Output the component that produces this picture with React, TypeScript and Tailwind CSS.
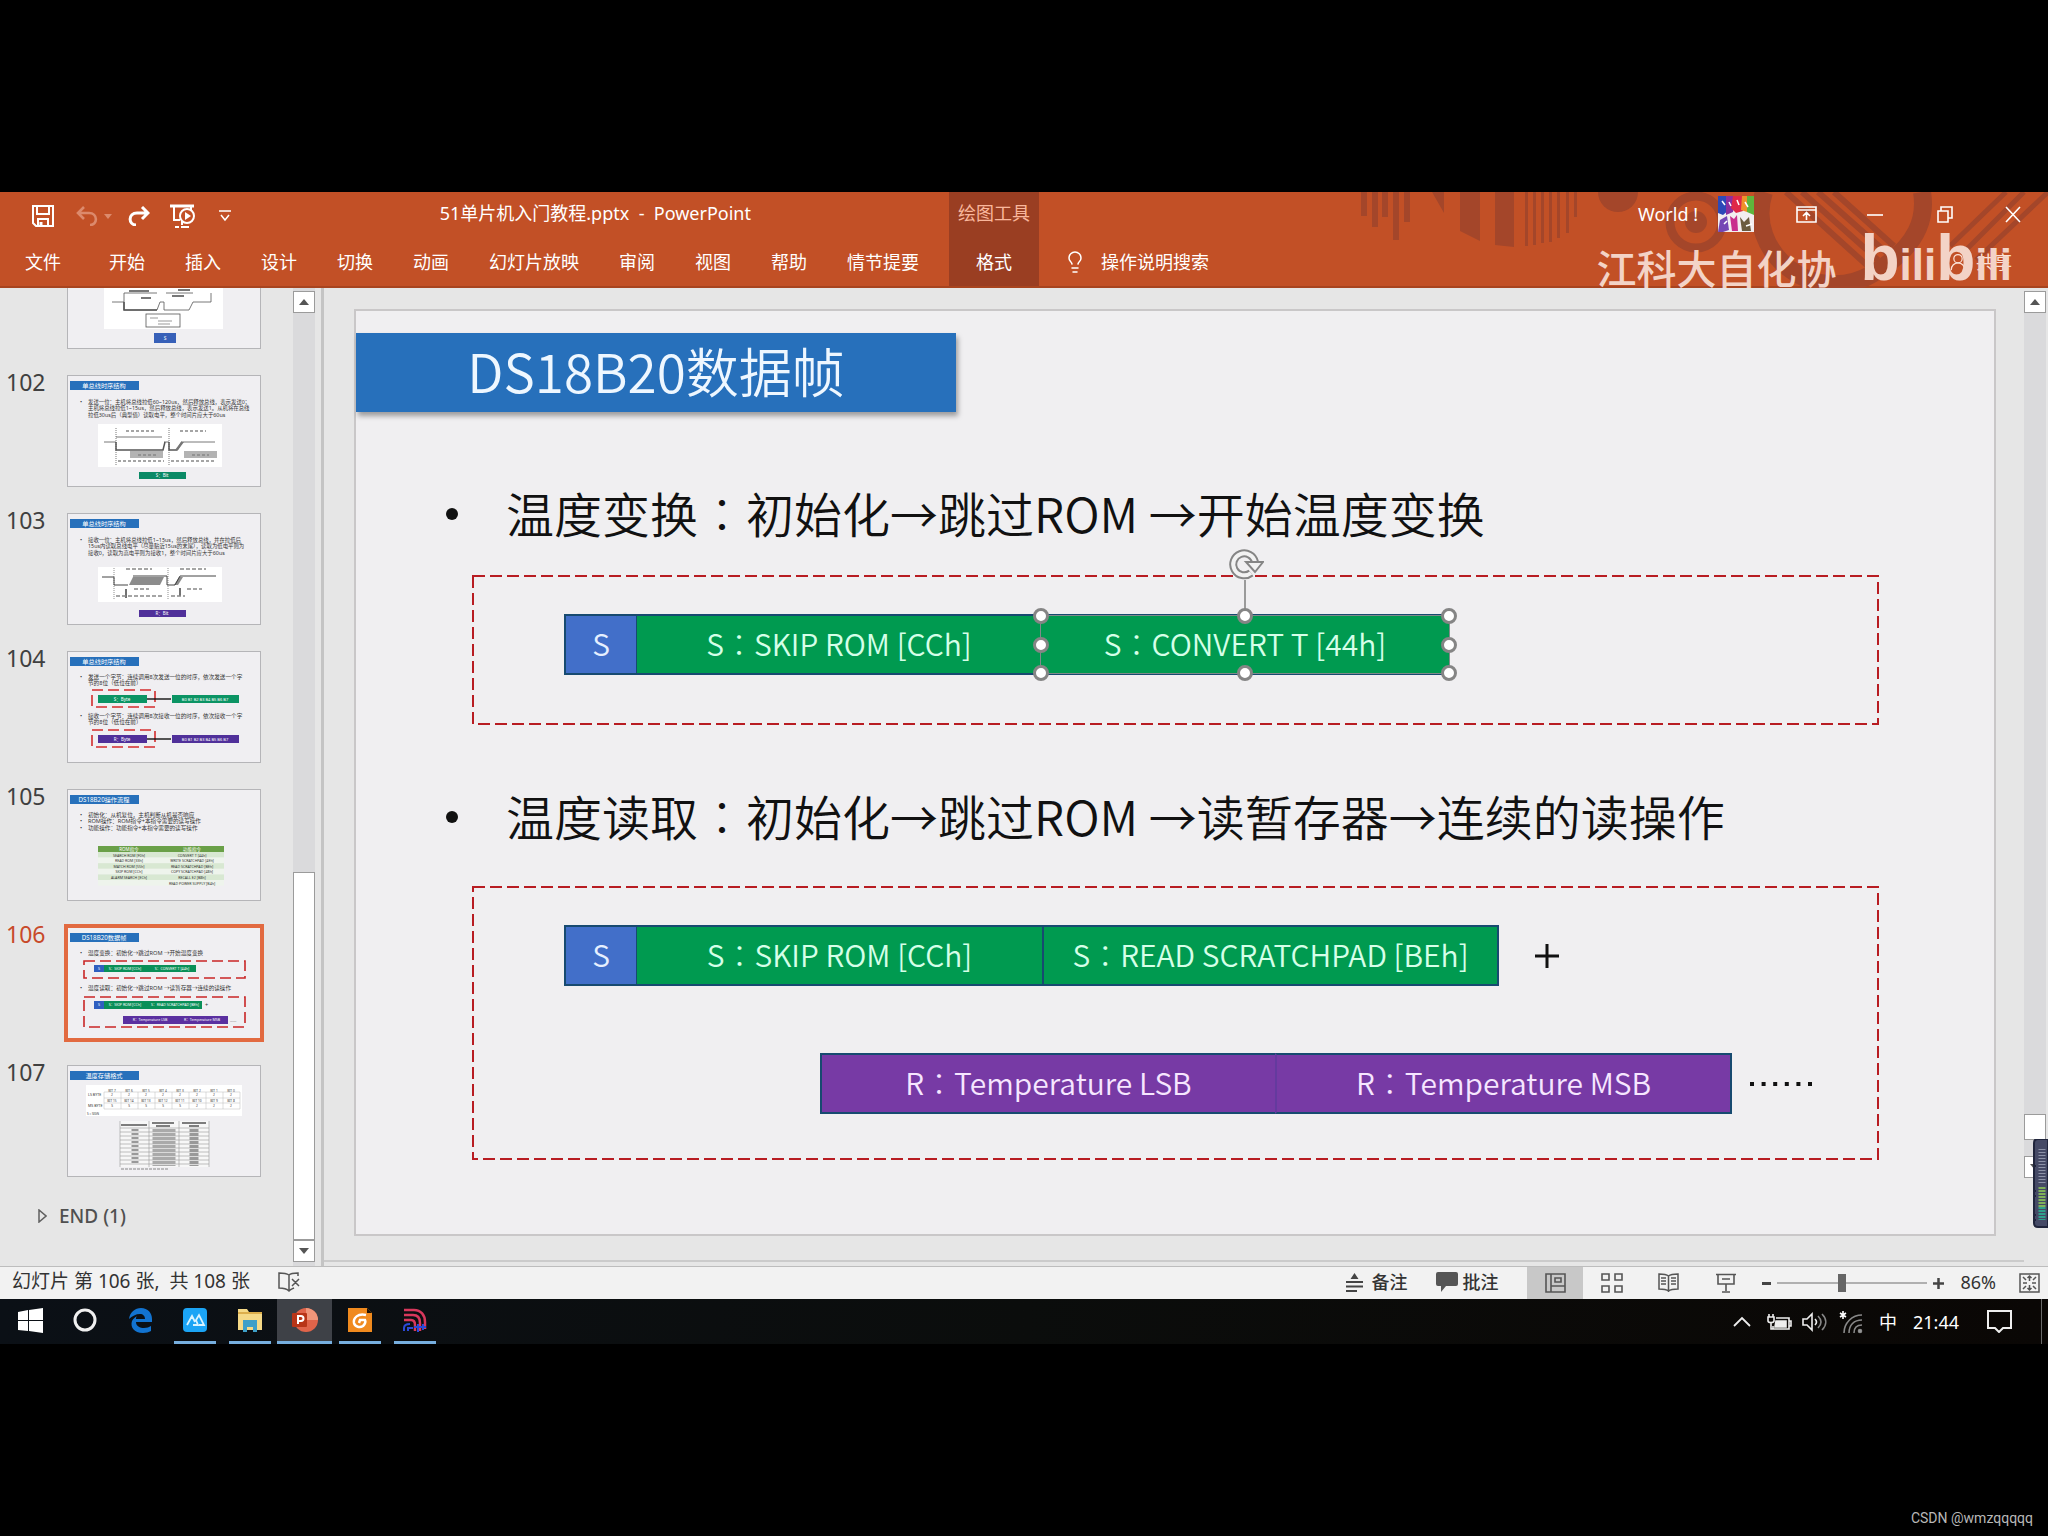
import type { ReactNode } from "react";
import { Lightbulb, UserRound } from "lucide-react";

const tabs = ["开始", "插入", "设计", "切换", "动画", "幻灯片放映", "审阅", "视图", "帮助", "情节提要"];

/* ---------- title bar + ribbon ---------- */

function SaveIcon() {
  return (
    <svg width="22" height="22" viewBox="0 0 22 22" fill="none" stroke="#fff" strokeWidth="2">
      <path d="M1 1h20v20H4l-3-3z" />
      <path d="M5 2v7h12V2M6 21v-7h10v7" />
      <path d="M9 17v4" strokeWidth="3" />
    </svg>
  );
}

function UndoIcon() {
  return (
    <svg width="22" height="20" viewBox="0 0 22 20" fill="none" stroke="#dc8a6c" strokeWidth="2.6">
      <path d="M8 1L2 7l6 6M2 7h11c9 0 9 12 1 12" />
    </svg>
  );
}

function RedoIcon() {
  return (
    <svg width="22" height="20" viewBox="0 0 22 20" fill="none" stroke="#fff" strokeWidth="3">
      <path d="M14 1l6 6-6 6M20 7H9c-9 0-9 12-1 12" />
    </svg>
  );
}

function SlideShowIcon() {
  return (
    <svg width="25" height="24" viewBox="0 0 25 24" fill="none" stroke="#fff" strokeWidth="2">
      <path d="M0 2h24" strokeWidth="3" />
      <path d="M4 3v13h6M21 3v4M12 17v4M5 23h4M11 23h8" />
      <circle cx="17" cy="12" r="7" />
      <path d="M15 8l6 4-6 4z" fill="#fff" stroke="none" />
    </svg>
  );
}

function HeaderArt() {
  return (
    <svg className="absolute right-0 top-0" width="700" height="96" viewBox="1348 192 700 96" fill="#a4462a">
      <path d="M1361 192h6v24h-6zM1372 192h6v35h-6zM1382 192h6v25h-6zM1393 192h6v48h-6zM1404 192h6v30h-6z" />
      <path d="M1432 192h12v21zM1460 192h20v49l-20-10zM1495 192h19v55l-19-2z" />
      <path d="M1525 192h3v54h-3zM1533 192h3v53h-3zM1541 192h3v51h-3zM1549 192h3v50h-3zM1557 192h3v46h-3zM1566 192h3v41h-3zM1574 192h3v25h-3z" />
      <path d="M1598 192h40a20 20 0 0 1-40 0z" />
      <g fill="none" stroke="#a4462a">
        <circle cx="1696" cy="222" r="26" strokeWidth="9" />
        <path d="M1764 192c-20 60 50 116 108 82 48-28 54-58 50-82" strokeWidth="18" />
        <path d="M1786 192l84 76M1802 192l76 68M1818 192l70 62M1834 192l60 54" strokeWidth="6" />
        <path d="M1950 246l56-54M1962 254l62-62M1976 260l72-68" strokeWidth="5" />
      </g>
      <circle cx="1696" cy="222" r="11" />
    </svg>
  );
}

function Avatar() {
  return (
    <svg width="36" height="36" viewBox="0 0 36 36">
      <rect width="36" height="36" fill="#f3eef0" />
      <path d="M0 0h8l3 14-6 5-5-2z" fill="#2c49b8" />
      <path d="M8 0h9l-2 16-7 3z" fill="#8a2fa0" />
      <path d="M15 0h9l1 15-7 2-5-5z" fill="#e02848" />
      <path d="M24 0h7l-2 16-6-2z" fill="#f0912a" />
      <path d="M29 0h7v19l-7-3z" fill="#5fb53c" />
      <path d="M2 24l7-4 2 14-6 2H0z" fill="#7547b5" />
      <path d="M12 20l4 3 3-4 1 16h-6z" fill="#c92f8d" />
      <path d="M22 21l4 5 5-5 2 14h-9z" fill="#6b5b40" />
      <path d="M4 5l3 4M11 6l2 4M19 4l2 5M27 6l3 5M6 28l3-3M28 30l6-2" stroke="#fff" strokeWidth="1.5" />
    </svg>
  );
}

function WindowButtons() {
  return (
    <div className="flex items-center">
      <button aria-label="功能区显示选项" className="flex w-[64px] justify-center">
        <svg width="21" height="17" viewBox="0 0 21 17" fill="none" stroke="#fff" strokeWidth="1.6">
          <path d="M1 1h19v15H1zM1 4h19M10.500 14V7M7 10l3.500-3.500L14 10" />
        </svg>
      </button>
      <button aria-label="最小化" className="flex w-[74px] justify-center">
        <svg width="16" height="17" viewBox="0 0 16 17" stroke="#fff" strokeWidth="1.600">
          <path d="M0 9h16" />
        </svg>
      </button>
      <button aria-label="还原" className="flex w-[66px] justify-center">
        <svg width="16" height="17" viewBox="0 0 16 17" fill="none" stroke="#fff" strokeWidth="1.600">
          <path d="M1 5h10v11H1zM4 5V1h11v11h-4" />
        </svg>
      </button>
      <button aria-label="关闭" className="flex w-[70px] justify-center">
        <svg width="16" height="17" viewBox="0 0 16 17" fill="none" stroke="#fff" strokeWidth="1.600">
          <path d="M1 1l14 15M15 1L1 16" />
        </svg>
      </button>
    </div>
  );
}

function Header() {
  return (
    <header className="relative flex h-24 border-b-2 border-[#a8441f] bg-[#c25026] text-lg text-white">
      <HeaderArt />
      <div className="relative flex flex-col pr-2.5">
        <div className="flex h-12 items-center pl-8">
          <button aria-label="保存"><SaveIcon /></button>
          <button aria-label="撤消" className="ml-[22px]"><UndoIcon /></button>
          <svg className="ml-1.5" width="8" height="5" viewBox="0 0 8 5" fill="#dc8a6c"><path d="M0 0h8L4 5z" /></svg>
          <button aria-label="恢复" className="ml-4"><RedoIcon /></button>
          <button aria-label="从头开始" className="ml-5"><SlideShowIcon /></button>
          <button aria-label="自定义快速访问工具栏" className="ml-6">
            <svg width="12" height="12" viewBox="0 0 12 12" fill="none" stroke="#fff" strokeWidth="1.500">
              <path d="M0 1h12M2 5l4 5 4-5" />
            </svg>
          </button>
          <h1 className="ml-auto mr-[188px] whitespace-pre pb-1.5">51单片机入门教程.pptx  -  PowerPoint</h1>
        </div>
        <nav className="flex h-11 items-center">
          <button className="pl-[25px] pr-7">文件</button>
          {tabs.map((t) => (
            <button key={t} className="px-5">{t}</button>
          ))}
        </nav>
      </div>
      <div className="relative flex w-[90px] shrink-0 flex-col items-center bg-[#9a3e22]">
        <div className="flex h-12 items-center pb-1.5 text-[#f9b79c]">绘图工具</div>
        <button className="h-11">格式</button>
      </div>
      <div className="relative flex min-w-0 flex-1 flex-col">
        <div className="flex h-12 items-center justify-end pb-1">
          <span>World !</span>
          <span className="ml-5 mr-5"><Avatar /></span>
          <WindowButtons />
        </div>
        <div className="flex h-11 items-center pl-6">
          <Lightbulb size={24} strokeWidth={1.5} />
          <input
            aria-label="操作说明搜索"
            placeholder="操作说明搜索"
            className="ml-3.5 w-40 bg-transparent outline-none placeholder:text-white placeholder:opacity-100"
          />
          <button className="ml-auto flex items-center gap-2 pr-9 text-[#fbe3d8]">
            <UserRound size={20} strokeWidth={1.500} />共享
          </button>
        </div>
      </div>
      {/* channel watermark, lies over the ribbon */}
      <div className="pointer-events-none absolute right-9 top-[36px] flex items-end text-[#f3d3c6]">
        <span className="mr-6 text-[40px] font-medium leading-[52px]">江科大自化协</span>
        <span className="font-['Liberation_Sans',sans-serif] text-[44px] font-bold leading-[60px]">
          <span className="text-[64px]">b</span>ili<span className="text-[64px]">b</span>ili
        </span>
      </div>
    </header>
  );
}

/* ---------- thumbnails ---------- */

type LineProps = { x?: number; y: number; fill?: string; size?: number; anchor?: "start" | "middle"; children: ReactNode };

function T({ x = 20, y, fill = "#333", size = 5.600, anchor = "start", children }: LineProps) {
  return (
    <text x={x} y={y} fill={fill} fontSize={size} textAnchor={anchor}>{children}</text>
  );
}

function ThumbTitle({ children }: { children: ReactNode }) {
  return (
    <>
      <rect x="2" y="5" width="69" height="9" fill="#2770bb" />
      <T x={36} y={12} size={6.200} fill="#fff" anchor="middle">{children}</T>
    </>
  );
}

function Thumb101() {
  return (
    <>
      <rect x="36" y="10" width="119" height="81" fill="#fff" />
      <g fill="none" stroke="#555" strokeWidth="0.800">
        <path d="M56 55v17h33l3-8h4v8h25l4-8h18M56 64H44M56 55h33M98 55h27M143 55v9" />
        <path d="M56 64v8h33" strokeWidth="1.600" />
        <rect x="78" y="76" width="34" height="13" />
      </g>
      <path d="M73 60h10M104 58h12M61 53h20M110 52h12" stroke="#777" strokeWidth="2" />
      <path d="M82 80h8M90 83h14M90 86h12" stroke="#999" />
      <rect x="86" y="95" width="22" height="10" fill="#3760b8" />
      <T x={97} y={102} size={5} fill="#fff" anchor="middle">S</T>
    </>
  );
}

function Thumb102() {
  return (
    <>
      <ThumbTitle>单总线时序结构</ThumbTitle>
      <T x={12} y={28}>•</T>
      <T y={28} size={5.400}>发送一位：主机将总线拉低60~120us，然后释放总线，表示发送0；</T>
      <T y={34} size={5.400}>主机将总线拉低1~15us，然后释放总线，表示发送1。从机将在总线</T>
      <T y={41} size={5.400}>拉低30us后（典型值）读取电平，整个时间片应大于60us</T>
      <rect x="30" y="48" width="124" height="43" fill="#fff" />
      <g fill="none" stroke="#555" strokeWidth="0.800">
        <path d="M48 52v38M101 52v38" strokeDasharray="1 1" />
        <path d="M36 66h12M96 66h5M113 66h34M48 61h46" />
        <path d="M48 66v8h47l2-8M101 66v8h8l5-8" strokeWidth="1.500" />
      </g>
      <path d="M62 75h33v7H62zM116 75h33v7h-33z" fill="#b3b3b3" />
      <path d="M107 74l6-8h3l-6 8z" fill="#777" />
      <path d="M58 55h28M112 55h26M70 79h18M124 79h17M50 85h46M103 85h45" stroke="#888" strokeWidth="1.500" strokeDasharray="3 2" />
      <rect x="71" y="96" width="47" height="7" fill="#0b8a66" />
      <T x={94} y={101} size={4.500} fill="#fff" anchor="middle">S：Bit</T>
    </>
  );
}

function Thumb103() {
  return (
    <>
      <ThumbTitle>单总线时序结构</ThumbTitle>
      <T x={12} y={28}>•</T>
      <T y={28} size={5.400}>接收一位：主机将总线拉低1~15us，然后释放总线，并在拉低后</T>
      <T y={34} size={5.400}>15us内读取总线电平（尽量贴近15us的末尾），读取为低电平则为</T>
      <T y={41} size={5.400}>接收0，读取为高电平则为接收1，整个时间片应大于60us</T>
      <rect x="30" y="53" width="124" height="35" fill="#fff" />
      <path d="M61 71l4-8h31l-4 8zM106 71l5-8h4l-5 8z" fill="#8c8c8c" />
      <g fill="none" stroke="#444">
        <path d="M34 63h12v8h14M65 62h34v9h8l5-9h36" />
        <path d="M46 54v32M100 54v32" strokeWidth="0.600" strokeDasharray="1 1" />
        <path d="M58 84v-9M112 82v-8" strokeWidth="1.500" />
      </g>
      <path d="M58 55h26M112 55h26M66 75h15M119 75h15M48 82h46M103 82h14" stroke="#888" strokeWidth="1.500" strokeDasharray="4 2" />
      <rect x="71" y="96" width="47" height="7" fill="#50309a" />
      <T x={94} y={101} size={4.500} fill="#fff" anchor="middle">R：Bit</T>
    </>
  );
}

function ByteRow({ y, fill, label, prefix }: { y: number; fill: string; label: string; prefix: string }) {
  return (
    <>
      <rect x="24" y={y} width="63" height="17" fill="none" stroke="#d32c2c" strokeWidth="1.600" strokeDasharray="11 5" />
      <rect x="30" y={y + 5} width="49" height="8" fill={fill} />
      <T x={54} y={y + 11} size={4.500} fill="#fff" anchor="middle">{label}</T>
      <path d={`M79 ${y + 9}h24`} stroke="#111" strokeWidth="1.400" />
      <rect x="104" y={y + 5} width="67" height="8" fill={fill} />
      <T x={137} y={y + 11} size={4} fill="#fff" anchor="middle">{[0, 1, 2, 3, 4, 5, 6, 7].map((n) => prefix + n).join("  ")}</T>
    </>
  );
}

function Thumb104() {
  return (
    <>
      <ThumbTitle>单总线时序结构</ThumbTitle>
      <T x={12} y={27}>•</T>
      <T y={27}>发送一个字节：连续调用8次发送一位的时序，依次发送一个字</T>
      <T y={33}>节的8位（低位在前）</T>
      <ByteRow y={38} fill="#0b9464" label="S：Byte" prefix="B" />
      <T x={12} y={66}>•</T>
      <T y={66}>接收一个字节：连续调用8次接收一位的时序，依次接收一个字</T>
      <T y={72}>节的8位（低位在前）</T>
      <ByteRow y={78} fill="#50309a" label="R：Byte" prefix="B" />
    </>
  );
}

const commands = [
  ["SEARCH ROM [F0h]", "CONVERT T [44h]"],
  ["READ ROM [33h]", "WRITE SCRATCHPAD [4Eh]"],
  ["MATCH ROM [55h]", "READ SCRATCHPAD [BEh]"],
  ["SKIP ROM [CCh]", "COPY SCRATCHPAD [48h]"],
  ["ALARM SEARCH [ECh]", "RECALL E2 [B8h]"],
  ["", "READ POWER SUPPLY [B4h]"],
];

function Thumb105() {
  return (
    <>
      <ThumbTitle>DS18B20操作流程</ThumbTitle>
      <T x={12} y={27}>•</T>
      <T y={27}>初始化：从机复位，主机判断从机是否响应</T>
      <T x={12} y={33}>•</T>
      <T y={33}>ROM操作：ROM指令+本指令需要的读写操作</T>
      <T x={12} y={40}>•</T>
      <T y={40}>功能操作：功能指令+本指令需要的读写操作</T>
      <rect x="30" y="56" width="126" height="6" fill="#6aa048" />
      <T x={61} y={61} size={4.500} fill="#fff" anchor="middle">ROM指令</T>
      <T x={124} y={61} size={4.500} fill="#fff" anchor="middle">功能指令</T>
      {commands.map(([a, b], i) => (
        <g key={b}>
          <rect x="30" y={62 + i * 5.600} width="126" height="5.600" fill={i % 2 ? "#eef4ec" : "#d8e8d2"} />
          <T x={61} y={66.500 + i * 5.600} size={3.600} anchor="middle">{a}</T>
          <T x={124} y={66.500 + i * 5.600} size={3.600} anchor="middle">{b}</T>
        </g>
      ))}
    </>
  );
}

function Thumb106() {
  return (
    <>
      <ThumbTitle>DS18B20数据帧</ThumbTitle>
      <T x={12} y={27}>•</T>
      <T y={27}>温度变换：初始化→跳过ROM →开始温度变换</T>
      <g fill="none" stroke="#c92626" strokeWidth="1.600" strokeDasharray="11 5">
        <rect x="16" y="33" width="161" height="17" />
        <rect x="16" y="69" width="161" height="30" />
      </g>
      <rect x="26" y="37" width="10" height="7" fill="#2f5fc0" />
      <rect x="36" y="37" width="92" height="7" fill="#0a8f58" />
      <T x={31} y={42} size={3.600} fill="#fff" anchor="middle">S</T>
      <T x={57} y={42} size={3.600} fill="#fff" anchor="middle">S：SKIP ROM [CCh]</T>
      <T x={104} y={42} size={3.600} fill="#fff" anchor="middle">S：CONVERT T [44h]</T>
      <T x={12} y={62}>•</T>
      <T y={62}>温度读取：初始化→跳过ROM →读暂存器→连续的读操作</T>
      <rect x="26" y="73" width="10" height="8" fill="#2f5fc0" />
      <rect x="36" y="73" width="98" height="8" fill="#0a8f58" />
      <T x={31} y={78} size={3.600} fill="#fff" anchor="middle">S</T>
      <T x={57} y={78} size={3.600} fill="#fff" anchor="middle">S：SKIP ROM [CCh]</T>
      <T x={107} y={78} size={3.600} fill="#fff" anchor="middle">S：READ SCRATCHPAD [BEh]</T>
      <T x={137} y={79}>+</T>
      <rect x="55" y="88" width="105" height="8" fill="#5a30a0" />
      <T x={82} y={93} size={3.600} fill="#fff" anchor="middle">R：Temperature LSB</T>
      <T x={134} y={93} size={3.600} fill="#fff" anchor="middle">R：Temperature MSB</T>
      <T x={162} y={94} size={4}>……</T>
    </>
  );
}

const eight = [0, 1, 2, 3, 4, 5, 6, 7];

function Thumb107() {
  return (
    <>
      <ThumbTitle>温度存储格式</ThumbTitle>
      <rect x="18" y="19" width="156" height="31" fill="#fff" />
      <T x={20} y={30} size={3.600}>LS BYTE</T>
      <T x={20} y={41} size={3.600}>MS BYTE</T>
      <T x={19} y={49} size={3}>S = SIGN</T>
      {eight.map((n) => (
        <g key={n}>
          <T x={44 + n * 17} y={25.500} size={3.200} anchor="middle">BIT {7 - n}</T>
          <T x={44 + n * 17} y={30} size={3.200} anchor="middle">2</T>
          <T x={44 + n * 17} y={36} size={3.200} anchor="middle">BIT {15 - n}</T>
          <T x={44 + n * 17} y={41} size={3.200} anchor="middle">{n < 5 ? "S" : "2"}</T>
        </g>
      ))}
      <path d="M36 26h136M36 32h136M36 37h136M36 43h136M36 26v17M53 26v17M70 26v17M87 26v17M104 26v17M121 26v17M138 26v17M155 26v17M172 26v17" stroke="#bbb" strokeWidth="0.500" />
      <rect x="52" y="55" width="89" height="46" fill="#f7f7f7" />
      <path d="M52 62h89M52 66h89M52 70h89M52 74h89M52 78h89M52 82h89M52 86h89M52 90h89M52 94h89M52 98h89M52 55v46M81 55v46M111 55v46M141 55v46" stroke="#999" strokeWidth="0.600" />
      <path d="M53 59h26M84 57h22M88 60h14M114 57h24M121 60h10" stroke="#555" strokeWidth="1.500" />
      <path d="M67 63v36" stroke="#999" strokeWidth="7" strokeDasharray="2 2" />
      <path d="M96 63v37" stroke="#aaa" strokeWidth="23" strokeDasharray="3 1" />
      <path d="M126 63v37" stroke="#999" strokeWidth="9" strokeDasharray="3 1" />
      <path d="M53 103h48" stroke="#888" strokeDasharray="3 1" />
    </>
  );
}

const slides = [
  { no: "", art: <Thumb101 /> },
  { no: "102", art: <Thumb102 /> },
  { no: "103", art: <Thumb103 /> },
  { no: "104", art: <Thumb104 /> },
  { no: "105", art: <Thumb105 /> },
  { no: "106", art: <Thumb106 />, active: true },
  { no: "107", art: <Thumb107 /> },
];

function SlidePanel() {
  return (
    <aside className="w-[293px] shrink-0 overflow-hidden">
      <ul className="-mt-[50px] flex flex-col gap-7">
        {slides.map((s) => (
          <li key={s.no} className="flex">
            <span className={`w-[68px] pl-1.5 text-[23px] leading-[12px] ${s.active ? "text-[#c8492a]" : "text-[#404040]"}`}>{s.no}</span>
            <button
              aria-label={`幻灯片 ${s.no}`}
              className={`h-[110px] w-[192px] bg-[#f0eff2] ${s.active ? "outline-4 outline-[#e26a40]" : "outline-1 outline-[#b5b5b8]"}`}
            >
              <svg width="192" height="110" viewBox="0 0 192 110">{s.art}</svg>
            </button>
          </li>
        ))}
      </ul>
      <button className="mt-[26px] flex items-center gap-3 pl-[38px] text-[19px] font-medium leading-[28px] text-[#505050]">
        <svg width="9" height="14" viewBox="0 0 9 14" fill="none" stroke="#606060" strokeWidth="1.500"><path d="M1 1v12l7-6z" /></svg>
        END (1)
      </button>
    </aside>
  );
}

/* ---------- scroll bars ---------- */

function Arrow({ down }: { down?: boolean }) {
  return (
    <button
      aria-label={down ? "向下滚动" : "向上滚动"}
      className="flex h-[22px] w-[22px] shrink-0 items-center justify-center border border-[#9b9b9b] bg-white"
    >
      <svg width="10" height="6" viewBox="0 0 10 6" fill="#555"><path d={down ? "M0 0h10L5 6z" : "M0 6h10L5 0z"} /></svg>
    </button>
  );
}

function RecorderBar() {
  return (
    <svg className="absolute right-0 top-[851px]" width="15" height="89" viewBox="0 0 15 89">
      <path d="M15 0H5Q1 0 1 4v80q0 4 4 4h10z" fill="#454a66" stroke="#20253c" strokeWidth="2" />
      <path d="M9 10v36" stroke="#8d93a8" strokeWidth="7" strokeDasharray="1 2" />
      <path d="M9 48v20" stroke="#7fb05a" strokeWidth="7" strokeDasharray="2 1" />
      <path d="M9 68v13" stroke="#2fa08c" strokeWidth="7" strokeDasharray="2 1" />
      <path d="M0 27h3M0 52h3M0 57h3M0 76h3M0 81h3" stroke="#20253c" strokeWidth="2" />
    </svg>
  );
}

/* ---------- slide ---------- */

// full-width colon with its dots in the middle of the cell
function Colon() {
  return <span className="font-['Noto_Sans_CJK_TC',sans-serif] font-light">：</span>;
}

function Bullet({ children }: { children: ReactNode }) {
  return (
    <li className="flex items-center text-5xl leading-[60px] text-[#111]">
      <span className="mr-[48px] h-3 w-3 rounded-full bg-[#111]" />
      <span className="whitespace-pre pb-1">{children}</span>
    </li>
  );
}

function DashedBox({ className, children }: { className: string; children: ReactNode }) {
  return (
    <div className={`relative ml-[117px] mr-[116px] ${className}`}>
      <svg className="absolute inset-0 h-full w-full overflow-visible" fill="none">
        <rect width="100%" height="100%" stroke="#b81c22" strokeWidth="2" strokeDasharray="12 5" />
      </svg>
      <div className="relative">{children}</div>
    </div>
  );
}

function Cell({ className, children }: { className: string; children: ReactNode }) {
  return (
    <div className={`relative flex h-[61px] items-center justify-center whitespace-pre border-y-2 border-[#174a70] pb-0.5 text-[30px] ${className}`}>
      {children}
    </div>
  );
}

const green = "bg-[#009a50] text-[#d5ffe8]";
const purple = "bg-[#773aa5] text-[#f6e6ff]";

const knobs = [
  "left-0 top-0", "left-1/2 top-0", "left-full top-0",
  "left-0 top-1/2", "left-full top-1/2",
  "left-0 top-full", "left-1/2 top-full", "left-full top-full",
];

function Selection() {
  return (
    <div className="absolute inset-0 outline-1 outline-[#7f8a8a]">
      <div className="absolute bottom-full left-1/2 flex -translate-x-1/2 flex-col items-center">
        <svg width="38" height="32" viewBox="0 0 38 32" fill="none">
          <path d="M25 25A11 11 0 1 1 29 14" stroke="#858585" strokeWidth="8" />
          <path d="M25 25A11 11 0 1 1 29 14" stroke="#f2f2f2" strokeWidth="4" />
          <path d="M20 14h17l-8 10z" fill="#f2f2f2" stroke="#858585" strokeWidth="2" />
        </svg>
        <div className="h-9 w-0.5 bg-[#9a9a9a]" />
      </div>
      {knobs.map((k) => (
        <span key={k} className={`absolute h-4 w-4 -translate-x-1/2 -translate-y-1/2 rounded-full border-[3px] border-[#858585] bg-white ${k}`} />
      ))}
    </div>
  );
}

function Slide() {
  return (
    <article className="mb-6 ml-[30px] mr-7 mt-[21px] flex-1 border-2 border-[#c9c7c8] bg-[#f0eff1] pb-[75px] font-[350]">
      <h2 className="mt-[22px] flex h-[79px] w-[600px] items-center justify-center bg-[#2770bb] pb-1 text-[53px] text-[#eef7ff] shadow-[2px_4px_5px_rgba(0,0,0,0.35)]">
        DS18B20数据帧
      </h2>
      <ul className="pl-[90px] pt-[70px]">
        <Bullet>温度变换<Colon />初始化→跳过ROM →开始温度变换</Bullet>
      </ul>
      <DashedBox className="mt-[30px] pb-[49px] pl-[91px] pt-[38px]">
        <div className="flex">
          <Cell className="w-[72px] border-l-2 bg-[#426fc9] text-[#e6efff]">S</Cell>
          <Cell className={`w-[405px] border-l ${green}`}>S<Colon />SKIP ROM [CCh]</Cell>
          <Cell className={`w-[408px] ${green}`}>
            S<Colon />CONVERT T [44h]
            <Selection />
          </Cell>
        </div>
      </DashedBox>
      <ul className="pl-[90px] pt-[61px]">
        <Bullet>温度读取<Colon />初始化→跳过ROM →读暂存器→连续的读操作</Bullet>
      </ul>
      <DashedBox className="mt-[38px] pb-[45px] pl-[91px] pt-[38px]">
        <div className="flex items-center">
          <Cell className="w-[72px] border-l-2 bg-[#426fc9] text-[#e6efff]">S</Cell>
          <Cell className={`w-[406px] border-l ${green}`}>S<Colon />SKIP ROM [CCh]</Cell>
          <Cell className={`w-[457px] border-x-2 ${green}`}>S<Colon />READ SCRATCHPAD [BEh]</Cell>
          <svg className="ml-9" width="24" height="24" viewBox="0 0 24 24" stroke="#111" strokeWidth="3"><path d="M12 0v24M0 12h24" /></svg>
        </div>
        <div className="flex items-center pl-[256px] pt-[67px]">
          <Cell className={`w-[455px] border-l-2 ${purple}`}>R<Colon />Temperature LSB</Cell>
          <Cell className={`w-[457px] border-x-2 border-l-[#643a9e] ${purple}`}>R<Colon />Temperature MSB</Cell>
          <svg className="ml-[18px]" width="64" height="4" viewBox="0 0 64 4"><path d="M0 2h64" stroke="#111" strokeWidth="4" strokeDasharray="4 7.600" /></svg>
        </div>
      </DashedBox>
    </article>
  );
}

/* ---------- status bar ---------- */

function StatusBar() {
  return (
    <footer className="flex h-8 items-center bg-[#f2f2f2] text-lg text-[#333]">
      <span className="whitespace-pre pb-0.5 pl-3 text-[19px]">幻灯片 第 106 张,  共 108 张</span>
      <button aria-label="拼写检查" className="ml-7 pb-0.5">
        <svg width="23" height="20" viewBox="0 0 23 20" fill="none" stroke="#555" strokeWidth="1.500">
          <path d="M11 3v16M11 3C8 1 5 1 1 1v15c4 0 7 0 10 3 2-2 3-2 5-3M11 3c2-2 5-2 9-2v3M14 7l7 7M21 7l-7 7" />
        </svg>
      </button>
      <div className="ml-auto flex h-full items-center">
        <button className="mr-[29px] flex items-center gap-2 pb-0.5 font-medium">
          <svg width="17" height="19" viewBox="0 0 17 19" fill="#444"><path d="M8.500 0l4 6h-8zM0 8h17v2H0zM0 12.500h17v2H0zM0 17h11v2H0z" /></svg>
          备注
        </button>
        <button className="mr-[29px] flex items-center gap-1 pb-0.5 font-medium">
          <svg width="22" height="20" viewBox="0 0 22 20" fill="#555"><path d="M2 0h18q2 0 2 2v10q0 2-2 2H10l-5 6v-6H2q-2 0-2-2V2q0-2 2-2z" /></svg>
          批注
        </button>
        <button aria-label="普通视图" className="flex h-full w-[56px] items-center justify-center bg-[#c8c8c8]">
          <svg width="21" height="20" viewBox="0 0 21 20" fill="none" stroke="#555" strokeWidth="1.600"><path d="M1 1h19v18H1zM6 1v18M6 13h14M10 5h6v4h-6z" /></svg>
        </button>
        <button aria-label="幻灯片浏览" className="flex w-[57px] justify-center">
          <svg width="22" height="20" viewBox="0 0 22 20" fill="none" stroke="#555" strokeWidth="1.600"><path d="M1 1h7v6H1zM14 1h7v6h-7zM1 13h7v6H1zM14 13h7v6h-7z" /></svg>
        </button>
        <button aria-label="阅读视图" className="flex w-[57px] justify-center">
          <svg width="21" height="20" viewBox="0 0 21 20" fill="none" stroke="#555" strokeWidth="1.500"><path d="M10.500 3v16M10.500 3C8 1 4 1 1 1v15c4 0 7 0 9.500 2 2.500-2 6-2 9.500-2V1c-3 0-7 0-9.500 2zM3 5h5M3 8h5M3 11h5M13 5h5M13 8h5M13 11h5" /></svg>
        </button>
        <button aria-label="幻灯片放映" className="flex w-[57px] justify-center">
          <svg width="20" height="20" viewBox="0 0 20 20" fill="none" stroke="#555" strokeWidth="1.600"><path d="M0 1.500h20M2 2v9h16V2M6 6h8M10 11v7M6 19h8" /></svg>
        </button>
        <button aria-label="缩小" className="ml-2 h-[3px] w-[9px] bg-[#444]" />
        <input
          type="range"
          aria-label="显示比例"
          min={0}
          max={100}
          defaultValue={43}
          className="mx-1.5 h-5 w-[150px] appearance-none bg-transparent [&::-webkit-slider-runnable-track]:h-0.5 [&::-webkit-slider-runnable-track]:bg-[#b0b0b0] [&::-webkit-slider-thumb]:-mt-2 [&::-webkit-slider-thumb]:h-[18px] [&::-webkit-slider-thumb]:w-2 [&::-webkit-slider-thumb]:appearance-none [&::-webkit-slider-thumb]:bg-[#666]"
        />
        <button aria-label="放大">
          <svg width="11" height="11" viewBox="0 0 11 11" stroke="#444" strokeWidth="2.500"><path d="M5.500 0v11M0 5.500h11" /></svg>
        </button>
        <span className="ml-4 pb-0.5">86%</span>
        <button aria-label="使幻灯片适应当前窗口" className="ml-[23px] mr-2">
          <svg width="21" height="20" viewBox="0 0 21 20" fill="none" stroke="#555" strokeWidth="1.500"><path d="M1 1h19v18H1zM10.500 3v5M10.500 12v5M4 10h4M13 10h4M8.500 5l2-2 2 2M8.500 15l2 2 2-2M4 4l3 3M17 4l-3 3M4 16l3-3M17 16l-3-3" /></svg>
        </button>
      </div>
    </footer>
  );
}

/* ---------- taskbar ---------- */

const apps = [
  {
    name: "开始",
    icon: <path d="M1 5l10-2v10H1zM12 3l14-2v12H12zM1 14h10v10L1 23zM12 14h14v12l-14-2z" fill="#fff" />,
  },
  { name: "Cortana", icon: <circle cx="13" cy="13" r="10" fill="none" stroke="#f0f0f0" strokeWidth="3" /> },
  {
    name: "Edge",
    icon: <path d="M2 12C3 5 8 1 14 1c7 0 11 5 11 11v3H9c0 4 4 6 8 6 3 0 5-1 7-2v5c-2 1-5 2-8 2-9 0-13-6-11-12 1-2 3-4 5-5-1 1-1 2-1 3h9c0-3-2-5-5-5-4 0-8 2-11 5z" fill="#1273d0" />,
  },
  {
    name: "MindMaster",
    open: true,
    icon: (
      <>
        <rect x="1" y="1" width="24" height="24" rx="4" fill="#1ba4f5" />
        <path d="M5 18l5-9 3 6M11 18h5l-2-5 3-5 5 10h-5" fill="none" stroke="#d8f3ff" strokeWidth="1.800" />
      </>
    ),
  },
  {
    name: "文件资源管理器",
    open: true,
    icon: (
      <>
        <path d="M1 2h9l2 3h13v18H1z" fill="#f5d987" />
        <path d="M1 5h24v2H1z" fill="#dcae4c" />
        <path d="M6 13h14v12h-4v-5h-6v5H6z" fill="#3d9fc8" />
      </>
    ),
  },
  {
    name: "PowerPoint",
    open: true,
    current: true,
    icon: (
      <>
        <circle cx="14" cy="13" r="12" fill="#e0644a" />
        <path d="M14 1a12 12 0 0 1 12 12H14z" fill="#f0967a" />
        <rect x="0" y="6" width="15" height="14" rx="1" fill="#b83518" />
        <path d="M6 17V9h3a2.500 2.500 0 0 1 0 5H6" fill="none" stroke="#fff" strokeWidth="2" />
      </>
    ),
  },
  {
    name: "Foxit",
    open: true,
    icon: (
      <>
        <path d="M1 1h19l5 5v19H1z" fill="#f08a1e" />
        <path d="M20 1v5h5z" fill="#1a1208" />
        <path d="M19 8c-8-2-13 3-12 8 1 4 6 5 9 3 2-2 3-4 2-6h-5l-1 3" fill="none" stroke="#fff" strokeWidth="2.500" />
      </>
    ),
  },
  {
    name: "录屏",
    open: true,
    icon: (
      <>
        <path d="M2 3h10c7 0 11 5 11 12v7M2 8h9c5 0 7 3 7 8v8M2 13h7c3 0 4 2 4 5v6" fill="none" stroke="#d8385c" strokeWidth="2.500" />
        <path d="M2 24v-3c0-3 3-4 6-4M6 24v-3h5M12 20h12M16 17v8M21 17v6" fill="none" stroke="#2b4ad8" strokeWidth="2" />
      </>
    ),
  },
];

function Taskbar() {
  return (
    <div className="flex h-[45px] items-center bg-linear-to-r from-[#0b1016] via-[#0b0d0c] to-[#0a0705] text-white">
      <div className="flex h-full pl-0.5">
        {apps.map((a) => (
          <button
            key={a.name}
            aria-label={a.name}
            className={`flex h-full w-[55px] flex-col items-center ${a.current ? "bg-[#3e4147]" : ""}`}
          >
            <span className="flex flex-1 items-center"><svg width="26" height="26" viewBox="0 0 26 26">{a.icon}</svg></span>
            <span className={`h-[3px] ${a.current ? "w-full" : "w-[42px]"} ${a.open ? "bg-[#76aede]" : ""}`} />
          </button>
        ))}
      </div>
      <div className="ml-auto flex h-full items-center">
        <button aria-label="显示隐藏的图标" className="mr-4">
          <svg width="18" height="11" viewBox="0 0 18 11" fill="none" stroke="#eee" strokeWidth="1.800"><path d="M1 10l8-8 8 8" /></svg>
        </button>
        <svg className="mr-2.5" width="25" height="18" viewBox="0 0 25 18" fill="none" stroke="#eee" strokeWidth="1.600">
          <path d="M9 5h13v11H6v-3M22 8h2v5h-2M2 1v3M6 1v3M1 4h6v4c0 2-6 2-6 0zM4 9v7h2" />
          <path d="M9 8h10v6H8z" fill="#eee" />
        </svg>
        <svg className="mr-2.5" width="27" height="20" viewBox="0 0 27 20" fill="none" stroke="#eee" strokeWidth="1.600">
          <path d="M1 7h4l5-5v16l-5-5H1zM13 7c2 2 2 4 0 6" />
          <path d="M16 4c4 4 4 8 0 12M20 2c5 5 5 11 0 16" stroke="#888" />
        </svg>
        <svg className="mr-4" width="24" height="24" viewBox="0 0 24 24" fill="none" stroke="#888" strokeWidth="1.600">
          <path d="M5 23C5 13 13 5 23 5M10 23c0-8 5-13 13-13M15 23c0-5 3-8 8-8" />
          <circle cx="21" cy="21" r="1.500" fill="#aaa" />
          <path d="M4 1v8M1 3l6 4M7 3L1 7" stroke="#fff" />
        </svg>
        <span className="mr-4 text-lg">中</span>
        <span className="mr-7 text-lg">21:44</span>
        <button aria-label="通知" className="mr-[29px]">
          <svg width="25" height="23" viewBox="0 0 25 23" fill="none" stroke="#eee" strokeWidth="2"><path d="M1 1h23v17h-8l-4 4-4-4H1z" /></svg>
        </button>
        <span className="mr-1.5 h-full w-px bg-[#6a6a6a]" />
      </div>
    </div>
  );
}

export default function App() {
  return (
    <main className="relative flex min-h-screen flex-col justify-center bg-black font-['Noto_Sans','Noto_Sans_CJK_SC',sans-serif]">
      <Header />
      <div className="relative flex border-b border-[#bdbdbd] bg-[#e6e6e6]">
        <SlidePanel />
        <div className="flex w-[22px] shrink-0 flex-col bg-[#dadadc] pb-1 pt-[3px]">
          <Arrow />
          <div className="flex-1" />
          <div className="h-[368px] border border-[#9b9b9b] bg-white" />
          <Arrow down />
        </div>
        <div className="ml-1.5 w-[3px] bg-[#c4c4c4]" />
        <div className="mb-1 flex min-w-0 flex-1 flex-col border-b-2 border-[#cbcbcb] font-['Noto_Sans_CJK_SC',sans-serif]">
          <Slide />
        </div>
        <div className="mr-0.5 flex w-[22px] shrink-0 flex-col pt-[3px]">
          <Arrow />
          <div className="flex h-[843px] flex-col justify-end bg-[#dadadc] pb-4">
            <div className="h-[26px] border border-[#9b9b9b] bg-white" />
          </div>
          <Arrow down />
        </div>
        <RecorderBar />
      </div>
      <StatusBar />
      <Taskbar />
      <span className="absolute bottom-2 right-[15px] font-['Roboto',sans-serif] text-sm text-[#b8b8b8]">CSDN @wmzqqqqq</span>
    </main>
  );
}
